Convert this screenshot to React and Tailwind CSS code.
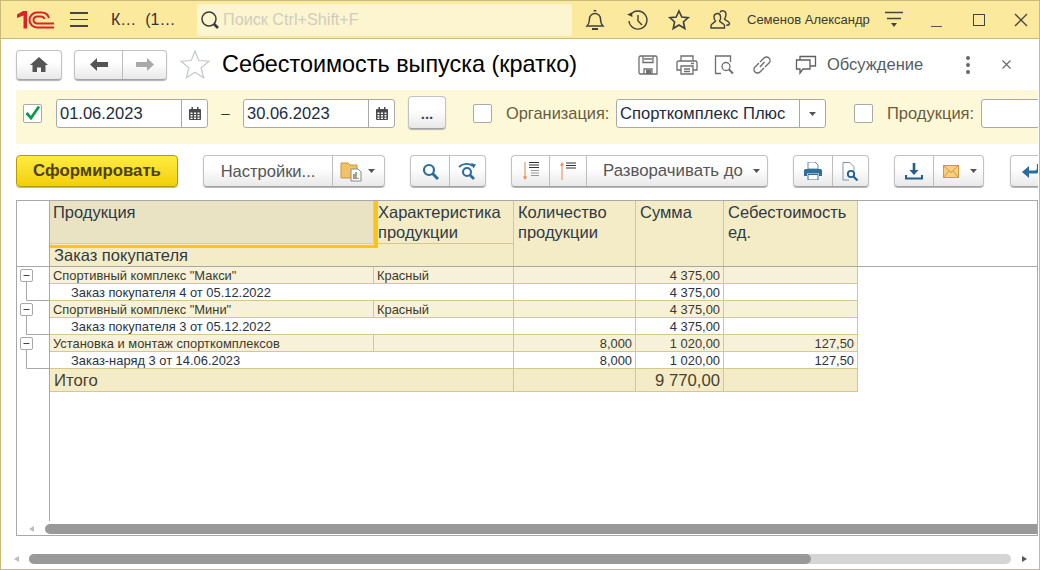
import React from 'react';

const btn = 'flex shrink-0 rounded-[4px] border border-[#c2c2c2] border-b-[#a3a3a3] bg-linear-to-b from-white from-40% to-[#e9e9e9] shadow-[0_1px_1px_#b0b0b0]';
const sep = 'border-l border-[#bdbdbd]';

function Caret() {
  return (
    <svg width="7" height="4" viewBox="0 0 7 4">
      <path d="M0 0h7L3.5 4z" fill="#555" />
    </svg>
  );
}

function Logo() {
  return (
    <svg width="38" height="18" viewBox="0 0 38 18" fill="none" stroke="#d8232a">
      <path d="M0 3.500 6 0h4v17.500H6.500V4.500L0 7z" fill="#d8232a" stroke="none" />
      <path d="M37 16.500H20a7.500 7.500 0 0 1 0-15h4.500a8 8 0 0 1 7.500 5.500" strokeWidth="2" />
      <path d="M37 12.500H20a3.500 3.500 0 0 1 0-7h4a4 4 0 0 1 3.500 2.500" strokeWidth="2" />
    </svg>
  );
}

function TopIcon({ children, className = '' }) {
  return (
    <svg width="24" height="24" viewBox="0 0 24 24" fill="none" stroke="#3f3f3f" strokeWidth="1.4" className={`shrink-0 ${className}`}>
      {children}
    </svg>
  );
}

function Check({ on }) {
  return (
    <div className="w-[19px] h-[19px] shrink-0 rounded-[2px] border border-[#a9a9a9] bg-white flex items-center justify-center overflow-visible">
      {on && (
        <svg width="17" height="17" viewBox="0 0 17 17" fill="none" className="-mt-[3px]">
          <path d="M2.500 9 7 14 15 2.500" stroke="#0f9a4a" strokeWidth="2.8" />
        </svg>
      )}
    </div>
  );
}

function Calendar() {
  return (
    <svg width="12" height="13" viewBox="0 0 12 13">
      <path d="M1 2h10a1 1 0 0 1 1 1v9a1 1 0 0 1-1 1H1a1 1 0 0 1-1-1V3a1 1 0 0 1 1-1z" fill="#4a4a4a" />
      <rect x="2.5" y="0" width="1.5" height="3" fill="#4a4a4a" />
      <rect x="8" y="0" width="1.5" height="3" fill="#4a4a4a" />
      <path d="M1.5 5.500h2v1.500h-2zM5 5.500h2v1.500H5zM8.500 5.500h2v1.500h-2zM1.500 8h2v1.500h-2zM5 8h2v1.500H5zM8.500 8h2v1.500h-2zM1.500 10.500h2V12h-2zM5 10.500h2V12H5zM8.500 10.500h2V12h-2z" fill="#fff" />
    </svg>
  );
}

function DateField({ value }) {
  return (
    <div className="w-[152px] h-[29px] shrink-0 flex rounded-[3px] border border-[#a9a9a9] bg-white">
      <div className="flex-1 pl-[3px] text-[16.5px] leading-[27px] text-[#1d2c3d]">{value}</div>
      <div className="w-[26px] border-l border-[#a9a9a9] flex items-center justify-center">
        <Calendar />
      </div>
    </div>
  );
}

function Tree({ kind }) {
  return (
    <svg width="32" height="17" viewBox="0 0 32 17" className="shrink-0" fill="none">
      {kind === 'group' ? (
        <>
          <rect x="3.5" y="2.5" width="12" height="12" rx="1.5" fill="#fff" stroke="#a8a8a8" />
          <path d="M6.500 8.500h6" stroke="#444" />
          <path d="M9.500 14.500V17" stroke="#a8a8a8" />
        </>
      ) : (
        <path d="M9.500 0V16.500H32" stroke="#a8a8a8" />
      )}
    </svg>
  );
}

const cell = 'shrink-0 border-r border-[#d5c88d] h-full text-right pr-[3px]';

function GroupRow({ name, attr, qty, sum, price }) {
  return (
    <div className="flex h-[17px] shrink-0 text-[12.9px] leading-[17px] text-[#3c3a2c]">
      <div className="w-[33px] shrink-0 border-r border-[#a8a8a8] bg-white"><Tree kind="group" /></div>
      <div className="flex border-b border-[#d5c88d] bg-[#f7f1da]">
        <div className="w-[324px] shrink-0 border-r border-[#d5c88d] pl-[3px]">{name}</div>
        <div className="w-[140px] shrink-0 border-r border-[#d5c88d] pl-[3px]">{attr}</div>
        <div className={`w-[122px] ${cell}`}>{qty}</div>
        <div className={`w-[88px] ${cell}`}>{sum}</div>
        <div className={`w-[134px] ${cell}`}>{price}</div>
      </div>
    </div>
  );
}

function DetailRow({ name, qty, sum, price }) {
  return (
    <div className="flex h-[17px] shrink-0 text-[12.9px] leading-[17px] text-[#2a3340]">
      <div className="w-[33px] shrink-0 border-r border-[#a8a8a8] bg-white"><Tree kind="detail" /></div>
      <div className="flex border-b border-[#d5c88d] bg-white">
        <div className="w-[464px] shrink-0 border-r border-[#d5c88d] pl-[21px]">{name}</div>
        <div className={`w-[122px] ${cell}`}>{qty}</div>
        <div className={`w-[88px] ${cell}`}>{sum}</div>
        <div className={`w-[134px] ${cell}`}>{price}</div>
      </div>
    </div>
  );
}

export default function App() {
  return (
    <div className="w-[1040px] h-[570px] overflow-hidden flex flex-col border border-[#c9bb78] bg-white font-['Liberation_Sans',Arial,sans-serif]">
      {/* Шапка */}
      <div className="h-[38px] shrink-0 flex items-center bg-[#fbe99d] border-b border-[#c9bb78] *:shrink-0">
        <div className="ml-[16px] w-[38px] flex"><Logo /></div>
        <div className="ml-[15px] w-[18px] flex flex-col gap-[5px]">
          <div className="h-[1.5px] bg-[#444]" />
          <div className="h-[1.5px] bg-[#444]" />
          <div className="h-[1.5px] bg-[#444]" />
        </div>
        <div className="ml-[23px] w-[86px] text-[16px] text-[#333] whitespace-pre">К…  (1…</div>
        <div className="w-[375px] h-[32px] flex items-center rounded-[3px] bg-[#fdf5d0]">
          <svg width="22" height="22" viewBox="0 0 22 22" fill="none" className="ml-[2px]">
            <circle cx="10" cy="10" r="7" stroke="#3a3a3a" strokeWidth="1.5" />
            <path d="M15 15l4 4" stroke="#3a3a3a" strokeWidth="2.6" />
          </svg>
          <span className="ml-[2px] text-[16.2px] text-[#cfcdbd]">Поиск Ctrl+Shift+F</span>
        </div>
        <TopIcon className="ml-[11px]">
          <path d="M4 18c2-2 2.500-3.500 2.500-7a5.500 5.500 0 0 1 11 0c0 3.500.5 5 2.500 7z" />
          <path d="M11 3.500a1 1 0 0 1 2 0" />
          <path d="M9 21h6" strokeWidth="2" />
        </TopIcon>
        <TopIcon className="ml-[18px]">
          <path d="M5.500 7a9 9 0 1 1-1.500 6" />
          <path d="M2 6.500 7 4.500 7.500 9z" fill="#3f3f3f" stroke="none" />
          <path d="M13 7v6l4 4" />
        </TopIcon>
        <TopIcon className="ml-[18px]">
          <path d="M12 3l2.800 6 6.400.7-4.800 4.300 1.400 6.500L12 17l-5.800 3.500 1.400-6.500L2.800 9.700 9.200 9z" strokeWidth="1.6" />
        </TopIcon>
        <TopIcon className="ml-[18px]">
          <path d="M2 20v-2.500c0-2 4-3 4.500-4.500-2-2-2.500-7 1.500-7.500 4-.5 4.500 5 2.500 7.500.5 1.500 5 2.500 5 4.500V20z" />
          <path d="M11 4.500c1-2.500 6-2.500 6 2 0 2-.5 3-1.500 4.500.5 1.500 5 2 5 4.500 0 1.500-2 2.500-3 1" />
        </TopIcon>
        <div className="ml-[14px] w-[125px] text-[13px] text-[#3a3a3a] whitespace-nowrap">Семенов Александр</div>
        <svg width="18" height="17" viewBox="0 0 18 17" className="ml-[13px]">
          <path d="M0 1.500h18M2 7.500h14" stroke="#444" strokeWidth="1.3" />
          <path d="M6 12h6l-3 4z" fill="#444" />
        </svg>
        <div className="ml-[28px] mt-[14px] w-[11px] h-[1.5px] bg-[#555]" />
        <div className="ml-[31px] w-[12px] h-[12px] border-[1.5px] border-[#444]" />
        <svg width="14" height="14" viewBox="0 0 14 14" className="ml-[29px]">
          <path d="M1 1l12 12M13 1 1 13" stroke="#444" strokeWidth="1.3" />
        </svg>
      </div>

      <div className="flex-1 flex flex-col pl-[15px] pr-[1px] min-h-0">
        {/* Заголовок формы */}
        <div className="h-[51px] shrink-0 flex items-center *:shrink-0">
          <div className={`${btn} w-[46px] h-[30px] items-center justify-center`}>
            <svg width="18" height="15" viewBox="0 0 18 15"><path d="M9 0 18 8h-2.500v7h-4.500v-4.500H7V15H2.500V8H0z" fill="#555" /></svg>
          </div>
          <div className={`${btn} ml-[12px] w-[93px] h-[30px]`}>
            <div className="w-[47px] flex items-center justify-center">
              <svg width="18" height="13" viewBox="0 0 18 13"><path d="M0 6.500 7 0v4h11v5H7v4z" fill="#555" /></svg>
            </div>
            <div className={`flex-1 flex items-center justify-center ${sep}`}>
              <svg width="18" height="13" viewBox="0 0 18 13"><path d="M18 6.500 11 0v4H0v5h11v4z" fill="#a9a9a9" /></svg>
            </div>
          </div>
          <svg width="30" height="29" viewBox="0 0 30 29" className="ml-[13px]" fill="#fff" stroke="#c4c8cc" strokeWidth="1.2">
            <path d="M15 1l3.800 9.500 10.200.7-7.900 6.500 2.500 10L15 22.200 6.400 27.700l2.500-10L1 11.200l10.200-.7z" />
          </svg>
          <div className="ml-[12px] w-[416px] text-[23.4px] text-black whitespace-nowrap">Себестоимость выпуска (кратко)</div>
          <svg width="20" height="20" viewBox="0 0 20 20" fill="none" stroke="#6f6f6f" strokeWidth="1.3">
            <path d="M2.500 1h15a1.500 1.500 0 0 1 1.500 1.500V19H2.500A1.500 1.500 0 0 1 1 17.500v-15A1.500 1.500 0 0 1 2.500 1z" />
            <path d="M5 1v6.500h10V1M6 4h8M6 19v-5h8v5" />
            <rect x="8" y="15" width="5" height="4" fill="#6f6f6f" stroke="none" />
          </svg>
          <svg width="22" height="20" viewBox="0 0 22 20" fill="none" stroke="#6f6f6f" strokeWidth="1.3" className="ml-[18px]">
            <path d="M5 6V1h12v5M5 15H1V7.500A1.500 1.500 0 0 1 2.500 6h17A1.500 1.500 0 0 1 21 7.500V15h-4" />
            <path d="M5 11h12v8H5zM8 14h6M8 16.500h6M15 8.500h3" />
          </svg>
          <svg width="20" height="20" viewBox="0 0 20 20" fill="none" stroke="#6f6f6f" strokeWidth="1.3" className="ml-[16px]">
            <path d="M7 18.500H1.500V1h15v6" />
            <circle cx="12" cy="11.500" r="4" />
            <path d="M15 14.500l4 4" strokeWidth="2" />
          </svg>
          <svg width="20" height="20" viewBox="0 0 20 20" fill="none" stroke="#6f6f6f" strokeWidth="1.4" className="ml-[18px]">
            <path d="M8 12 12.500 7M7 8l-4 4a3.500 3.500 0 0 0 5 5l4-4M13 12l4-4a3.500 3.500 0 0 0-5-5L8 7" />
          </svg>
          <svg width="22" height="20" viewBox="0 0 22 20" fill="none" stroke="#5f5f5f" strokeWidth="1.3" className="ml-[23px]">
            <path d="M1.500 5h13.500v9H8l-3 4v-4H1.500z" />
            <path d="M5 5V1.500h15.500V11H15" />
          </svg>
          <div className="ml-[10px] w-[96px] text-[16.5px] text-[#555d66] whitespace-nowrap">Обсуждение</div>
          <div className="ml-[43px] flex flex-col gap-[3px]">
            <div className="w-[4px] h-[4px] rounded-full bg-[#666]" />
            <div className="w-[4px] h-[4px] rounded-full bg-[#666]" />
            <div className="w-[4px] h-[4px] rounded-full bg-[#666]" />
          </div>
          <svg width="9" height="9" viewBox="0 0 9 9" className="ml-[32px]">
            <path d="M.5.500l8 8M8.500.500l-8 8" stroke="#666" strokeWidth="1.1" />
          </svg>
        </div>

        {/* Отбор */}
        <div className="h-[54px] shrink-0 flex items-start bg-[#fdf8d8] overflow-hidden pt-[9px] *:shrink-0">
          <div className="ml-[7px] mt-[5px]"><Check on /></div>
          <div className="ml-[14px]"><DateField value="01.06.2023" /></div>
          <div className="w-[35px] text-center text-[15px] leading-[28px] text-[#333]">–</div>
          <DateField value="30.06.2023" />
          <div className={`${btn} ml-[13px] -mt-[3px] w-[38px] h-[33px] items-end justify-center pb-[4px] text-[15px] leading-[20px] font-bold text-[#444]`}>...</div>
          <div className="ml-[27px] mt-[5px]"><Check /></div>
          <div className="ml-[14px] w-[110px] text-[16.4px] leading-[29px] text-[#6b5c3c]">Организация:</div>
          <div className="w-[210px] h-[29px] flex rounded-[3px] border border-[#a9a9a9] bg-white">
            <div className="flex-1 pl-[3px] text-[16.6px] leading-[27px] text-[#1d2c3d]">Спорткомплекс Плюс</div>
            <div className="w-[26px] border-l border-[#a9a9a9] flex items-center justify-center"><Caret /></div>
          </div>
          <div className="ml-[28px] mt-[5px]"><Check /></div>
          <div className="ml-[14px] w-[94px] text-[16.5px] leading-[29px] text-[#6b5c3c]">Продукция:</div>
          <div className="w-[80px] h-[29px] rounded-[3px] border border-[#a9a9a9] bg-white" />
        </div>

        {/* Командная панель */}
        <div className="mt-[11px] h-[33px] shrink-0 flex items-start overflow-hidden">
          <div className="w-[162px] h-[32px] shrink-0 rounded-[4px] border border-[#b59d00] bg-linear-to-b from-[#ffec3d] to-[#f2cf00] shadow-[0_1px_1px_#b0b0b0] flex items-center justify-center text-[16.8px] font-bold text-[#4c4210]">
            Сформировать
          </div>
          <div className={`${btn} ml-[25px] w-[182px] h-[32px]`}>
            <div className="w-[128px] flex items-center justify-center text-[16.5px] text-[#555]">Настройки...</div>
            <div className={`flex-1 flex items-center ${sep}`}>
              <svg width="22" height="22" viewBox="0 0 22 22" className="ml-[7px]">
                <path d="M1 3h7l2 2h7v13H1z" fill="#f2c26a" stroke="#c99636" />
                <path d="M11 9h7l3 3v9H11z" fill="#fff" stroke="#888" />
                <path d="M14 18v-4" stroke="#d8352a" strokeWidth="1.3" />
                <path d="M16 18v-6" stroke="#2c9a4a" strokeWidth="1.3" />
                <path d="M13 18.500h6" stroke="#999" />
              </svg>
              <div className="ml-[6px] flex"><Caret /></div>
            </div>
          </div>
          <div className={`${btn} ml-[25px] w-[76px] h-[32px]`}>
            <div className="w-[38px] flex items-center justify-center">
              <svg width="17" height="17" viewBox="0 0 17 17" fill="none" stroke="#2a6c9c">
                <circle cx="7" cy="7" r="5" strokeWidth="2.2" />
                <path d="M10.500 10.500 16 16" strokeWidth="3" />
              </svg>
            </div>
            <div className={`flex-1 flex items-center justify-center ${sep}`}>
              <svg width="20" height="18" viewBox="0 0 20 18" fill="none" stroke="#2a6c9c">
                <circle cx="9" cy="10" r="4" strokeWidth="2" />
                <path d="M12 13l4 4" strokeWidth="2.6" />
                <path d="M1 5c4-4 10-4 14-1" strokeWidth="1.8" />
                <path d="M13 1l5 1.500-2.500 4z" fill="#2a6c9c" stroke="none" />
              </svg>
            </div>
          </div>
          <div className={`${btn} ml-[25px] w-[257px] h-[32px]`}>
            <div className="w-[37px] flex items-center justify-center">
              <svg width="18" height="20" viewBox="0 0 18 20" fill="none">
                <path d="M3 1v16" stroke="#e8834a" />
                <path d="M1 15.500h4L3 19z" fill="#e8834a" />
                <path d="M7 1.500h10M7 4h10M7 6.500h10" stroke="#333" />
                <path d="M9 9.500h8M9 12h8M9 14.500h8" stroke="#999" />
              </svg>
            </div>
            <div className={`w-[37px] flex items-center justify-center ${sep}`}>
              <svg width="18" height="20" viewBox="0 0 18 20" fill="none">
                <path d="M3 3v16" stroke="#e8834a" />
                <path d="M1 4.500h4L3 1z" fill="#e8834a" />
                <path d="M7 2h10M7 4.500h10M7 7h10" stroke="#333" />
              </svg>
            </div>
            <div className={`flex-1 flex items-center pl-[16px] text-[16.8px] text-[#555] whitespace-nowrap ${sep}`}>
              <span className="w-[150px] shrink-0">Разворачивать до</span>
              <Caret />
            </div>
          </div>
          <div className={`${btn} ml-[25px] w-[76px] h-[32px]`}>
            <div className="w-[38px] flex items-center justify-center">
              <svg width="18" height="18" viewBox="0 0 18 18">
                <path d="M4 0h7l3 3v4H4z" fill="#fff" stroke="#6b8ba6" />
                <path d="M1.500 7h15A1.500 1.500 0 0 1 18 8.500V14h-3v-2.500H3V14H0V8.500A1.500 1.500 0 0 1 1.500 7z" fill="#2f6f9e" />
                <path d="M4 12.500h10V18H4z" fill="#fff" stroke="#2f6f9e" />
              </svg>
            </div>
            <div className={`flex-1 flex items-center justify-center ${sep}`}>
              <svg width="17" height="19" viewBox="0 0 17 19" fill="none">
                <path d="M1 .500h7l4 4v4M1 .500V18h6" stroke="#7d94a8" />
                <circle cx="9" cy="12" r="3.2" stroke="#1f5f92" strokeWidth="1.8" />
                <path d="M11.500 14.500 15.500 18.500" stroke="#1f5f92" strokeWidth="2.2" />
              </svg>
            </div>
          </div>
          <div className={`${btn} ml-[25px] w-[90px] h-[32px]`}>
            <div className="w-[38px] flex items-center justify-center">
              <svg width="18" height="17" viewBox="0 0 18 17" fill="none">
                <path d="M9 0v9" stroke="#1f5f92" strokeWidth="2.6" />
                <path d="M4.500 7h9L9 12z" fill="#1f5f92" />
                <path d="M1 12v3.500h16V12" stroke="#1f5f92" strokeWidth="2" />
              </svg>
            </div>
            <div className={`flex-1 flex items-center ${sep}`}>
              <svg width="16" height="13" viewBox="0 0 16 13" className="ml-[9px]">
                <rect x=".5" y=".5" width="15" height="12" fill="#f6cf7f" stroke="#d39a3c" />
                <path d="M.5.500 8 7.500 15.500.500M.5 12.500 6 6M15.500 12.500 10 6" fill="none" stroke="#d39a3c" />
              </svg>
              <div className="ml-[11px] flex"><Caret /></div>
            </div>
          </div>
          <div className={`${btn} ml-[26px] w-[60px] h-[32px] items-center pl-[11px]`}>
            <svg width="19" height="15" viewBox="0 0 19 15" fill="none" className="shrink-0">
              <path d="M16.500 0v4.500a3.500 3.500 0 0 1-3.500 3.500H5" stroke="#2a6c9c" strokeWidth="3.2" />
              <path d="M7 2v12L0 8z" fill="#2a6c9c" />
            </svg>
          </div>
        </div>

        {/* Отчет */}
        <div className="mt-[12px] h-[336px] shrink-0 flex flex-col border border-[#a8a8a8] overflow-hidden">
          <div className="h-[66px] shrink-0 flex border-b border-[#a8a8a8] text-[16.5px] leading-[20px] text-[#2f3a45] whitespace-nowrap">
            <div className="w-[33px] shrink-0 border-r border-[#a8a8a8]" />
            <div className="w-[464px] shrink-0 flex flex-col border-r border-[#d5c88d] bg-[#f4ecc6]">
              <div className="h-[47px] flex shrink-0">
                <div className="w-[328px] shrink-0 h-full border-r-[4px] border-b-[3px] border-[#fcc419]">
                  <div className="h-[43px] border-b border-r border-[#d5cfa8] bg-[#e9e3c4] pl-[3px] pt-[1px]">Продукция</div>
                </div>
                <div className="flex-1 h-[43px] border-b border-[#d5c88d] pt-[1px]">Характеристика<br />продукции</div>
              </div>
              <div className="pl-[4px] leading-[15px]">Заказ покупателя</div>
            </div>
            <div className="w-[122px] shrink-0 border-r border-[#d5c88d] bg-[#f4ecc6] pl-[4px] pt-[1px]">Количество<br />продукции</div>
            <div className="w-[88px] shrink-0 border-r border-[#d5c88d] bg-[#f4ecc6] pl-[4px] pt-[1px]">Сумма</div>
            <div className="w-[134px] shrink-0 border-r border-[#d5c88d] bg-[#f4ecc6] pl-[4px] pt-[1px]">Себестоимость<br />ед.</div>
          </div>

          <GroupRow name={'Спортивный комплекс "Макси"'} attr="Красный" sum="4 375,00" />
          <DetailRow name="Заказ покупателя 4 от 05.12.2022" sum="4 375,00" />
          <GroupRow name={'Спортивный комплекс "Мини"'} attr="Красный" sum="4 375,00" />
          <DetailRow name="Заказ покупателя 3 от 05.12.2022" sum="4 375,00" />
          <GroupRow name="Установка и монтаж спорткомплексов" qty="8,000" sum="1 020,00" price="127,50" />
          <DetailRow name="Заказ-наряд 3 от 14.06.2023" qty="8,000" sum="1 020,00" price="127,50" />

          <div className="flex h-[23px] shrink-0 text-[16.7px] leading-[23px] text-[#46422e]">
            <div className="w-[33px] shrink-0 border-r border-[#a8a8a8]" />
            <div className="flex border-b border-[#d5c88d] bg-[#f4ecc6]">
              <div className="w-[464px] shrink-0 border-r border-[#d5c88d] pl-[4px]">Итого</div>
              <div className="w-[122px] shrink-0 border-r border-[#d5c88d]" />
              <div className="w-[88px] shrink-0 border-r border-[#d5c88d] text-right pr-[3px]">9 770,00</div>
              <div className="w-[134px] shrink-0 border-r border-[#d5c88d]" />
            </div>
          </div>

          <div className="flex-1 min-h-0"><div className="w-[33px] h-full border-r border-[#a8a8a8]" /></div>
          <div className="h-[14px] shrink-0 flex pt-[3px]">
            <div className="w-[28px] h-[10px] flex items-center justify-center pl-[1px]">
              <svg width="5" height="6" viewBox="0 0 5 6"><path d="M5 0v6L0 3z" fill="#bdbdbd" /></svg>
            </div>
            <div className="flex-1 h-[10px] rounded-l-[5px] bg-[#999]" />
          </div>
        </div>

        {/* Нижняя прокрутка */}
        <div className="mt-[18px] h-[10px] shrink-0 flex items-center -ml-[15px]">
          <div className="w-[28px] flex justify-center pl-[2px]">
            <svg width="5" height="6" viewBox="0 0 5 6"><path d="M5 0v6L0 3z" fill="#bdbdbd" /></svg>
          </div>
          <div className="w-[982px] h-[10px] rounded-[5px] bg-[#d5d5d5]">
            <div className="w-[782px] h-[10px] rounded-[5px] bg-[#999]" />
          </div>
          <div className="flex-1 flex justify-center">
            <svg width="5" height="6" viewBox="0 0 5 6"><path d="M0 0v6l5-3z" fill="#555" /></svg>
          </div>
        </div>
      </div>
    </div>
  );
}
